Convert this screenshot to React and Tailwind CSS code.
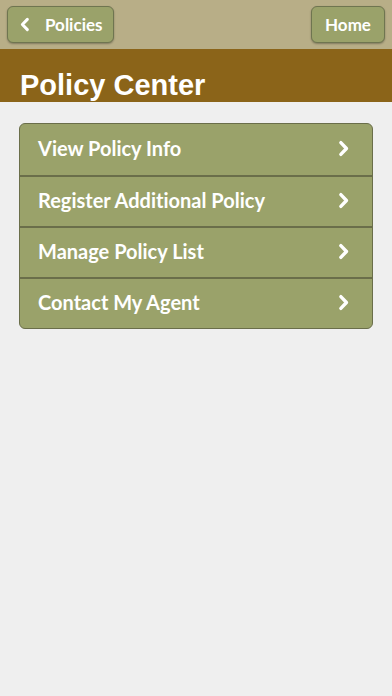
const items = ['View Policy Info', 'Register Additional Policy', 'Manage Policy List', 'Contact My Agent'];

const Chevron = ({ dir = 'right', className }) => (
  <svg viewBox="0 0 10 16" className={className} fill="none" stroke="currentColor" strokeWidth="3.2" strokeLinecap="round" strokeLinejoin="round">
    {dir === 'right' ? <path d="M2.5 2.5 L7.8 8 L2.5 13.5" /> : <path d="M7.5 2.5 L2.2 8 L7.5 13.5" />}
  </svg>
);

const App = () => {
  return (
    <div className="min-h-[696px] w-full bg-[#efefef] font-['Lato',sans-serif] [font-variant-ligatures:none]">
      {/* Nav bar */}
      <div className="h-[49px] bg-[#b8ae87] flex items-center justify-between px-[7px]">
        <button className="h-[37px] w-[107px] flex items-center rounded-[6px] bg-[#9aa26a] border border-[#6f7550] shadow-[0_1px_2px_rgba(0,0,0,0.3)] text-white font-bold text-[17px] pl-[12px]">
          <Chevron dir="left" className="w-[10px] h-[15px]" />
          <span className="ml-[15px]">Policies</span>
        </button>
        <button className="h-[37px] w-[74px] flex items-center justify-center rounded-[6px] bg-[#9aa26a] border border-[#6f7550] shadow-[0_1px_2px_rgba(0,0,0,0.3)] text-white font-bold text-[17px]">
          Home
        </button>
      </div>

      {/* Title bar */}
      <div className="h-[53px] bg-[#8b6419] overflow-hidden px-[20px] pt-[19px]">
        <h1 className="text-white font-bold text-[29px] leading-[34px] font-['Liberation_Sans',Arial,sans-serif]">Policy Center</h1>
      </div>

      {/* Menu list */}
      <div className="px-[19px] pt-[21px]">
        <div className="rounded-[6px] border border-[#6a6e4a] bg-[#9aa26a] overflow-hidden">
          {items.map((item, i) => (
            <div
              key={item}
              className={`h-[51px] flex items-center justify-between pl-[18px] pr-[23px] pb-[3px] ${i > 0 ? 'border-t-2 border-[#6a6e4a]' : ''}`}
            >
              <span className="text-white font-bold text-[20px]">{item}</span>
              <Chevron className="w-[11px] h-[17px] text-white" />
            </div>
          ))}
        </div>
      </div>
    </div>
  );
};

export default App;
